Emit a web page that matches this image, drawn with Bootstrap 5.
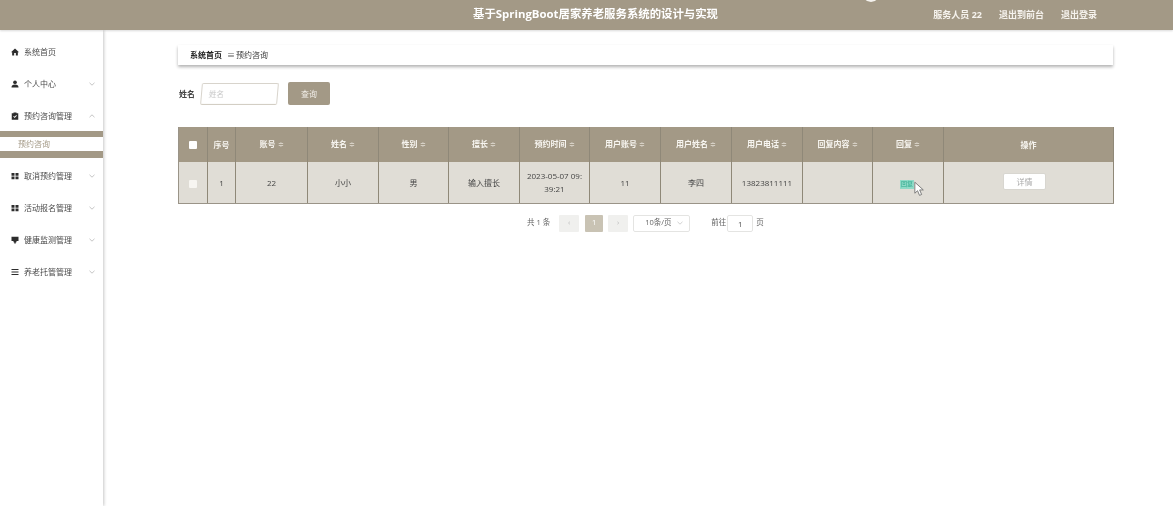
<!doctype html>
<html lang="zh">
<head>
<meta charset="utf-8">
<title>预约咨询</title>
<link rel="stylesheet" href="https://cdn.jsdelivr.net/npm/bootstrap@5.3.0/dist/css/bootstrap.min.css">
<style>
html,body{height:100%;overflow:hidden;background:#fff}
body{font-family:"Open Sans","Noto Sans CJK SC",sans-serif;font-size:8px;color:#555}
.shell{height:506px;display:flex;flex-direction:column;filter:blur(.4px)}
.topbar{height:30px;flex:none;background:#a39986;color:#fff;box-shadow:0 1px 2px rgba(0,0,0,.15);position:relative;padding:0 76px 0 0;z-index:2}
.topbar-title{position:absolute;left:473px;top:6px;font-size:11.4px;line-height:16px;font-weight:700;white-space:nowrap}
.avatar-arc{position:absolute;left:862px;top:-17px;width:18px;height:19px;border-radius:50%;background:#f4f2ee}
.top-links{margin-left:auto;height:30px;gap:17px;font-size:9px;font-weight:700;color:#f6f3ee}
.body-wrap{flex:1;display:flex;min-height:0}
.side{width:103px;flex:none;background:#fff;box-shadow:1px 0 3px rgba(0,0,0,.22);padding-top:6px}
.menu-row{height:32px;padding:0 8px 0 11px;display:flex;align-items:center;color:#4a4a4a;white-space:nowrap}
.menu-row svg.ic{width:8px;height:8px;margin-right:5px;flex:none;fill:#2d2d2d}
.menu-row svg.chev{width:6px;height:4px;margin-left:auto;flex:none;fill:none;stroke:#b5b5b5;stroke-width:.8}
.sub-open{border-top:6px solid #a39986;border-bottom:7px solid #a39986;height:27px;display:flex;align-items:center;padding-left:18px;color:#a39986;margin-top:-1px;margin-bottom:2px}
.page{flex:1;padding:15px 60px 0 75px;min-width:0}
.crumb{height:20px;background:#fff;box-shadow:0 2px 3px rgba(0,0,0,.3);display:flex;align-items:center;padding-left:12px;color:#3a3a3a}
.crumb b{color:#222;font-weight:700}
.crumb i{font-style:normal;margin:0 4px 0 5px;color:#555;width:5px}
.filter{margin-top:17px;height:23px;gap:10px;padding-left:1px}
.filter label{font-weight:600;color:#444;margin:0;font-size:8px;margin-right:-4px}
.fake-input{width:77px;height:22px;border:1px solid #d8d4cc;border-bottom-color:#cfcabf;border-radius:2px;transform:skewX(-5deg);padding-left:7px;color:#c5c5c5;font-size:7.5px;line-height:20px;background:#fff}
.query{width:42px;height:23px;background:#a39986;color:#f2efe9;font-size:8px;padding:0;border:0;border-radius:2px}
.data-table{margin:22px 0 0;width:935px;table-layout:fixed;border-collapse:collapse;--bs-table-bg:transparent;font-size:8px}
.data-table th,.data-table td{text-align:center;vertical-align:middle;padding:0 4px;border:1px solid #8f8878;border-width:0 1px 0 0}
.data-table tr>*:first-child{border-left:1px solid #9a9488}
.data-table thead th{height:35px;background:#a39986;color:#f7f5f0;font-weight:700}
.data-table tbody td{height:41px;background:#e0ddd6;color:#444;line-height:13px;border-bottom:1px solid #9a9488}
.data-table tr>*:last-child{border-right:1px solid #8f8878}
.sort{color:#d5cfc4;font-size:7px;margin-left:2px;font-weight:400}
.check{display:inline-block;width:8px;height:8px;background:#fff;border-radius:1px;vertical-align:middle}
tbody .check{background:#f7f5f1}
.w1{width:29px}.w2{width:28px}.w3{width:72px}.w4{width:71px}.w5{width:70px}.w6{width:71px}.w7{width:70px}.w8{width:71px}.w9{width:71px}.w10{width:71px}.w11{width:70px}.w12{width:71px}.w13{width:170px}
.reply-tag{display:inline-block;background:#8fdac7;color:#2fa88d;font-size:6px;line-height:9px;padding:0 1px;margin-right:2px}
.detail{display:inline-block;width:43px;height:17px;line-height:15px;padding:0;background:#fff;border:1px solid #d8d6d0;border-radius:2px;color:#aaa;font-size:8px;margin:0 8px 2px 0}
.cursor-mark{position:absolute;left:914px;top:181px;width:11px;height:16px;z-index:5}
.pager{margin-top:11px;height:17px;padding-left:349px;color:#666;font-size:7.5px}
.pager-count{margin-right:9px}
.pg{width:20px;height:17px;background:#f0f0ee;color:#bbb;display:flex;align-items:center;justify-content:center;border-radius:1px}
.pg.now{background:#c9c3b4;color:#fff;width:18px;margin:0 5px 0 6px}
.per{width:57px;height:17px;border:1px solid #e4e4e2;border-radius:2px;padding:0 6px 0 11px;justify-content:space-between;margin-left:5px}
.goto{margin:0 1px 0 21px}
.jump{width:26px;height:17px;border:1px solid #e4e4e2;border-radius:2px;text-align:center;line-height:15px;color:#555;font-size:8px}
.unit{margin-left:3px}
</style>
</head>
<body>
<div class="shell">
  <header class="topbar d-flex align-items-center">
    <div class="topbar-title">基于SpringBoot居家养老服务系统的设计与实现</div>
    <div class="avatar-arc"></div>
    <div class="top-links d-flex align-items-center">
      <span>服务人员 22</span><span>退出到前台</span><span>退出登录</span>
    </div>
  </header>
  <div class="body-wrap">
    <aside class="side">
      <div class="menu-row"><svg class="ic" viewBox="0 0 16 16"><path d="M8 1 0 8.500h2.300V15h4V10h3.400v5h4V8.500H16z"/></svg>系统首页</div>
      <div class="menu-row"><svg class="ic" viewBox="0 0 16 16"><circle cx="8" cy="4.500" r="3.700"/><path d="M1 15c0-4.500 2.500-6 7-6s7 1.500 7 6z"/></svg>个人中心<svg class="chev" viewBox="0 0 6 4"><path d="m.5.8 2.500 2.400L5.500.8"/></svg></div>
      <div class="menu-row"><svg class="ic" viewBox="0 0 16 16"><path fill-rule="evenodd" d="M1.500 2.500H5V1h6v1.500h3.500V15.500h-13zM4.500 9l1.200-1.200L7.300 9.400l3.200-3.200L11.700 7.400 7.300 11.800z"/></svg>预约咨询管理<svg class="chev" viewBox="0 0 6 4"><path d="m.5 3.200 2.500-2.400 2.500 2.400"/></svg></div>
      <div class="sub-open">预约咨询</div>
      <div class="menu-row"><svg class="ic" viewBox="0 0 16 16"><path d="M1 2h6v5.500H1zM9 2h6v5.500H9zM1 9h6v5.500H1zM9 9h6v5.500H9z"/></svg>取消预约管理<svg class="chev" viewBox="0 0 6 4"><path d="m.5.8 2.500 2.400L5.500.8"/></svg></div>
      <div class="menu-row"><svg class="ic" viewBox="0 0 16 16"><path d="M1 2h6v5.500H1zM9 2h6v5.500H9zM1 9h6v5.500H1zM9 9h6v5.500H9z"/></svg>活动报名管理<svg class="chev" viewBox="0 0 6 4"><path d="m.5.8 2.500 2.400L5.500.8"/></svg></div>
      <div class="menu-row"><svg class="ic" viewBox="0 0 16 16"><path d="M1 1.500h14v8.500h-4v2.500H9.500V15h-3v-2.500H5V10H1z"/></svg>健康监测管理<svg class="chev" viewBox="0 0 6 4"><path d="m.5.8 2.500 2.400L5.500.8"/></svg></div>
      <div class="menu-row"><svg class="ic" viewBox="0 0 16 16"><path d="M1 2h14v1.800H1zM1 7.100h14v1.800H1zM1 12.200h14V14H1z"/></svg>养老托管管理<svg class="chev" viewBox="0 0 6 4"><path d="m.5.8 2.500 2.400L5.500.8"/></svg></div>
    </aside>
    <main class="page">
      <div class="crumb"><b>系统首页</b><i>≡</i><span>预约咨询</span></div>
      <div class="filter d-flex align-items-center">
        <label>姓名</label>
        <div class="fake-input">姓名</div>
        <button type="button" class="btn query">查询</button>
      </div>
      <table class="table data-table">
        <colgroup>
          <col class="w1"><col class="w2"><col class="w3"><col class="w4"><col class="w5"><col class="w6"><col class="w7"><col class="w8"><col class="w9"><col class="w10"><col class="w11"><col class="w12"><col class="w13">
        </colgroup>
        <thead>
          <tr>
            <th><span class="check"></span></th>
            <th>序号</th>
            <th>账号<span class="sort">≑</span></th>
            <th>姓名<span class="sort">≑</span></th>
            <th>性别<span class="sort">≑</span></th>
            <th>擅长<span class="sort">≑</span></th>
            <th>预约时间<span class="sort">≑</span></th>
            <th>用户账号<span class="sort">≑</span></th>
            <th>用户姓名<span class="sort">≑</span></th>
            <th>用户电话<span class="sort">≑</span></th>
            <th>回复内容<span class="sort">≑</span></th>
            <th>回复<span class="sort">≑</span></th>
            <th>操作</th>
          </tr>
        </thead>
        <tbody>
          <tr>
            <td><span class="check"></span></td>
            <td>1</td>
            <td>22</td>
            <td>小小</td>
            <td>男</td>
            <td>输入擅长</td>
            <td>2023-05-07 09:<br>39:21</td>
            <td>11</td>
            <td>李四</td>
            <td>13823811111</td>
            <td></td>
            <td><span class="reply-tag">回复</span></td>
            <td><button type="button" class="btn detail">详情</button></td>
          </tr>
        </tbody>
      </table>
      <div class="pager d-flex align-items-center">
        <span class="pager-count">共 1 条</span>
        <span class="pg">‹</span>
        <span class="pg now">1</span>
        <span class="pg">›</span>
        <span class="per d-flex align-items-center">10条/页<svg width="6" height="4" viewBox="0 0 6 4" fill="none" stroke="#c5c5c5" stroke-width=".8"><path d="m.5.8 2.500 2.400L5.500.8"/></svg></span>
        <span class="goto">前往</span>
        <span class="jump">1</span>
        <span class="unit">页</span>
      </div>
    </main>
  </div>
  <svg class="cursor-mark" viewBox="0 0 13 18"><path d="M1 1v13l3.200-3 2.300 5.500 2.500-1-2.300-5.400H11z" fill="#fff" stroke="#6b6b6b" stroke-width="1"/></svg>
</div>
</body>
</html>
